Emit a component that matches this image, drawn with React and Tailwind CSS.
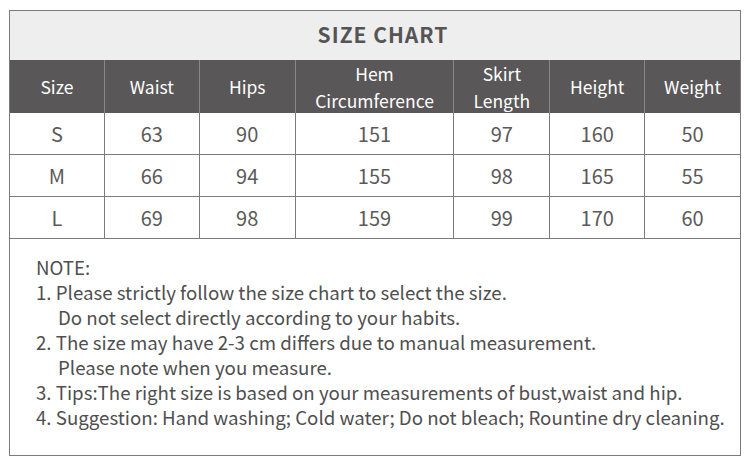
export default function App() {
  const cols = ["w-[95px]", "w-[95px]", "w-[96px]", "w-[159px]", "w-[96px]", "w-[95px]", "w-[95px]"];
  const headers = ["Size", "Waist", "Hips", "Hem\nCircumference", "Skirt\nLength", "Height", "Weight"];
  const rows = [
    ["S", "63", "90", "151", "97", "160", "50"],
    ["M", "66", "94", "155", "98", "165", "55"],
    ["L", "69", "98", "159", "99", "170", "60"],
  ];
  return (
    <div className="w-[750px] h-[456px] bg-white pt-[10px] pl-[9px]" style={{ fontFamily: '"Noto Sans CJK SC", "Noto Sans", sans-serif' }}>
      <div className="w-[732px] h-[446px] border border-[#7b7b7b] flex flex-col">
        <div className="h-[49px] bg-[#eeeeee] flex items-center justify-center pl-[16px] pb-[2px] text-[#555555] text-[21px] font-bold tracking-[1px]">
          SIZE CHART
        </div>
        <div className="flex h-[53px] bg-[#5a5758]">
          {headers.map((h, i) => (
            <div key={i} className={`${cols[i]} ${i < 6 ? "border-r border-[#8a8788]" : ""} flex items-center justify-center text-center text-white text-[17.5px] leading-[27px] whitespace-pre-line`}>
              {h}
            </div>
          ))}
        </div>
        {rows.map((r, ri) => (
          <div key={ri} className="flex h-[42px] border-b border-[#7b7b7b]">
            {r.map((c, i) => (
              <div key={i} className={`${cols[i]} ${i < 6 ? "border-r border-[#7b7b7b]" : ""} flex items-center justify-center text-[#5a5a5a] text-[20px]`}>
                {c}
              </div>
            ))}
          </div>
        ))}
        <div className="flex-1 pl-[26px] pt-[15px] text-[#4f4f4f] text-[18.7px] leading-[25px]">
          <div>NOTE:</div>
          <div>1. Please strictly follow the size chart to select the size.</div>
          <div className="pl-[22px]">Do not select directly according to your habits.</div>
          <div>2. The size may have 2-3 cm differs due to manual measurement.</div>
          <div className="pl-[22px]">Please note when you measure.</div>
          <div>3. Tips:The right size is based on your measurements of bust,waist and hip.</div>
          <div>4. Suggestion: Hand washing; Cold water; Do not bleach; Rountine dry cleaning.</div>
        </div>
      </div>
    </div>
  );
}
